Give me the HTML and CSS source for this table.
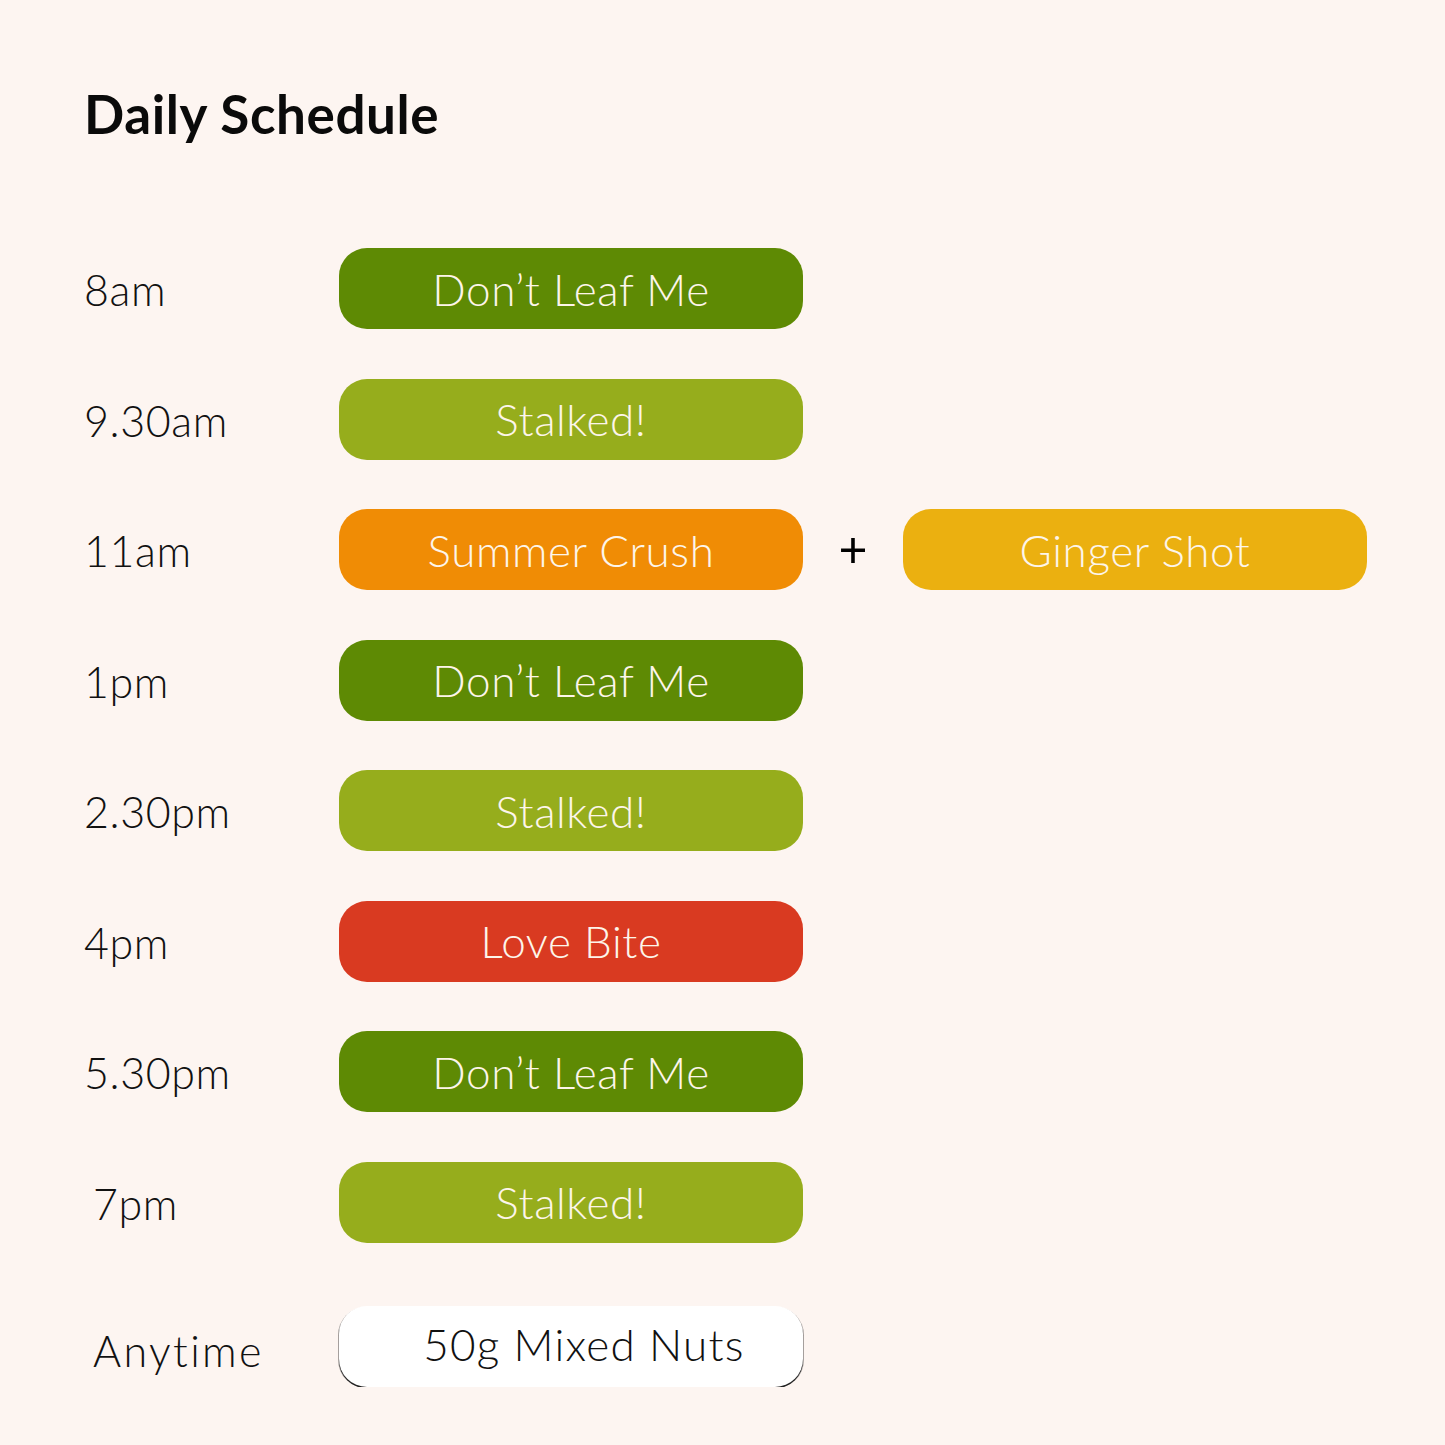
FILE: index.html
```html
<!DOCTYPE html>
<html>
<head>
<meta charset="utf-8">
<link rel="stylesheet" href="styles.css">
</head>
<body>
<main class="page">
  <h1 class="title">Daily Schedule</h1>
  <div class="schedule">
    <div class="row"><span class="time">8am</span><span class="pill dark">Don’t Leaf Me</span></div>
    <div class="row"><span class="time">9.30am</span><span class="pill light">Stalked!</span></div>
    <div class="row"><span class="time">11am</span><span class="pill orange">Summer Crush</span><span class="plus">+</span><span class="pill yellow">Ginger Shot</span></div>
    <div class="row"><span class="time">1pm</span><span class="pill dark">Don’t Leaf Me</span></div>
    <div class="row"><span class="time">2.30pm</span><span class="pill light">Stalked!</span></div>
    <div class="row"><span class="time">4pm</span><span class="pill red">Love Bite</span></div>
    <div class="row"><span class="time">5.30pm</span><span class="pill dark">Don’t Leaf Me</span></div>
    <div class="row"><span class="time indent">7pm</span><span class="pill light">Stalked!</span></div>
    <div class="row last"><span class="time indent wide">Anytime</span><span class="pill white">50g Mixed Nuts</span></div>
  </div>
</main>
</body>
</html>
```
FILE: styles.css
```css
html, body {
  margin: 0;
  padding: 0;
  background: #fdf5f1;
}
.page {
  padding: 82px 0 0 84px;
  font-family: Lato, "Noto Sans", sans-serif;
  color: #111;
}
.title {
  margin: 0;
  font-size: 53px;
  font-weight: 700;
  line-height: 64px;
  letter-spacing: 0.6px;
  color: #0a0a0a;
}
.schedule {
  margin-top: 102px;
  display: flex;
  flex-direction: column;
  gap: 49.5px;
}
.row {
  display: flex;
  align-items: center;
  height: 81px;
}
.row.last {
  margin-top: 14px;
}
.time {
  width: 255px;
  font-size: 43px;
  font-weight: 300;
  letter-spacing: 0.6px;
  padding-top: 2px;
  box-sizing: border-box;
}
.time.indent {
  padding-left: 9px;
}
.time.wide {
  letter-spacing: 2.4px;
  padding-top: 8px;
}
.pill {
  width: 464px;
  height: 81px;
  border-radius: 28px;
  display: flex;
  align-items: center;
  justify-content: center;
  color: #fdf5ea;
  font-size: 44px;
  font-weight: 300;
  letter-spacing: 0.6px;
  box-sizing: border-box;
}
.dark { background: #5e8a04; }
.light { background: #96ad1c; }
.orange { background: #f08c05; }
.yellow { background: #ebb010; }
.red { background: #d93a21; }
.white {
  background: #ffffff;
  color: #111;
  box-shadow: 0 1.5px 0 0 #222, 1px 1px 0 0 rgba(0,0,0,0.35), -1px 1px 0 0 rgba(0,0,0,0.35);
  padding-left: 26px;
  padding-bottom: 6px;
  letter-spacing: 1.2px;
}
.plus {
  width: 100px;
  text-align: center;
  font-size: 50px;
  font-weight: 400;
  color: #000;
  padding-bottom: 4px;
}
```
